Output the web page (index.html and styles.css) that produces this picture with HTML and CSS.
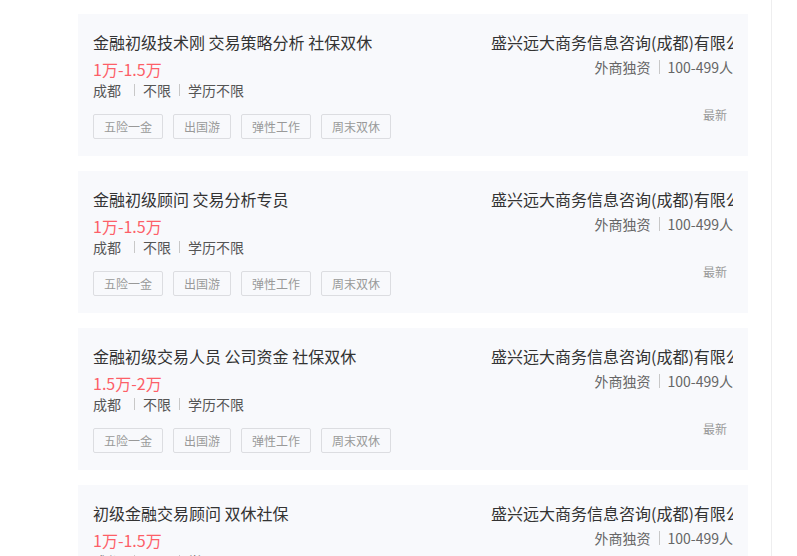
FILE: index.html
```html
<!DOCTYPE html>
<html lang="zh-CN">
<head>
<meta charset="utf-8">
<title>职位列表</title>
<link rel="stylesheet" href="styles.css">
</head>
<body>
<div class="page">
  <div class="list">
    <div class="card">
      <div class="left">
        <div class="title">金融初级技术刚 交易策略分析 社保双休</div>
        <div class="salary">1万-1.5万</div>
        <div class="info"><span class="city">成都</span><i class="sep"></i><span>不限</span><i class="sep"></i><span>学历不限</span></div>
        <div class="tags"><span class="tag">五险一金</span><span class="tag">出国游</span><span class="tag">弹性工作</span><span class="tag">周末双休</span></div>
      </div>
      <div class="right">
        <div class="company">盛兴远大商务信息咨询(成都)有限公司</div>
        <div class="meta"><span>外商独资</span><i class="sep"></i><span>100-499人</span></div>
        <div class="time">最新</div>
      </div>
    </div>
    <div class="card">
      <div class="left">
        <div class="title">金融初级顾问 交易分析专员</div>
        <div class="salary">1万-1.5万</div>
        <div class="info"><span class="city">成都</span><i class="sep"></i><span>不限</span><i class="sep"></i><span>学历不限</span></div>
        <div class="tags"><span class="tag">五险一金</span><span class="tag">出国游</span><span class="tag">弹性工作</span><span class="tag">周末双休</span></div>
      </div>
      <div class="right">
        <div class="company">盛兴远大商务信息咨询(成都)有限公司</div>
        <div class="meta"><span>外商独资</span><i class="sep"></i><span>100-499人</span></div>
        <div class="time">最新</div>
      </div>
    </div>
    <div class="card">
      <div class="left">
        <div class="title">金融初级交易人员 公司资金 社保双休</div>
        <div class="salary">1.5万-2万</div>
        <div class="info"><span class="city">成都</span><i class="sep"></i><span>不限</span><i class="sep"></i><span>学历不限</span></div>
        <div class="tags"><span class="tag">五险一金</span><span class="tag">出国游</span><span class="tag">弹性工作</span><span class="tag">周末双休</span></div>
      </div>
      <div class="right">
        <div class="company">盛兴远大商务信息咨询(成都)有限公司</div>
        <div class="meta"><span>外商独资</span><i class="sep"></i><span>100-499人</span></div>
        <div class="time">最新</div>
      </div>
    </div>
    <div class="card">
      <div class="left">
        <div class="title">初级金融交易顾问 双休社保</div>
        <div class="salary">1万-1.5万</div>
        <div class="info"><span class="city">成都</span><i class="sep"></i><span>不限</span><i class="sep"></i><span>学历不限</span></div>
        <div class="tags"><span class="tag">五险一金</span><span class="tag">出国游</span><span class="tag">弹性工作</span><span class="tag">周末双休</span></div>
      </div>
      <div class="right">
        <div class="company">盛兴远大商务信息咨询(成都)有限公司</div>
        <div class="meta"><span>外商独资</span><i class="sep"></i><span>100-499人</span></div>
        <div class="time">最新</div>
      </div>
    </div>
  </div>
  <div class="side"></div>
</div>
</body>
</html>
```
FILE: styles.css
```css
* { box-sizing: border-box; }
html, body { margin: 0; padding: 0; background: #fff; }
body {
  font-family: "Noto Sans CJK SC", "Liberation Sans", sans-serif;
  color: #333;
  height: 556px;
  overflow: hidden;
}
.page {
  display: flex;
  height: 556px;
  padding-left: 78px;
}
.list {
  width: 670px;
  padding-top: 14px;
  display: flex;
  flex-direction: column;
  gap: 15px;
}
.side {
  margin-left: 23px;
  width: 1px;
  background: #eeeeef;
  height: 100%;
}
.card {
  flex: none;
  height: 142px;
  background: #f8f9fc;
  padding: 17px 15px 0 15px;
  display: flex;
  justify-content: space-between;
}
.left { display: flex; flex-direction: column; }
.title {
  font-size: 16px;
  line-height: 22px;
  color: #333;
  white-space: nowrap;
}
.salary {
  margin-top: 5px;
  font-size: 16px;
  line-height: 22px;
  color: #fd5f68;
}
.info {
  font-size: 14px;
  line-height: 20px;
  color: #555;
  display: flex;
  align-items: center;
  white-space: nowrap;
}
.info .city { margin-right: 5px; }
.sep {
  display: inline-block;
  width: 1px;
  height: 12px;
  background: #c8c8c8;
  margin: 0 8px;
}
.tags {
  margin-top: 14px;
  display: flex;
  gap: 10px;
}
.tag {
  height: 25px;
  line-height: 23px;
  padding: 0 10px;
  border: 1px solid #dcdde1;
  border-radius: 2px;
  font-size: 12px;
  color: #999;
  white-space: nowrap;
}
.right {
  width: 242px;
  display: flex;
  flex-direction: column;
  align-items: flex-end;
}
.company {
  width: 242px;
  font-size: 16px;
  line-height: 22px;
  color: #333;
  white-space: nowrap;
  overflow: hidden;
}
.meta {
  margin-top: 3px;
  font-size: 14px;
  line-height: 22px;
  color: #666;
  display: flex;
  align-items: center;
  white-space: nowrap;
}
.meta .sep { margin: 0 8px; height: 14px; }
.time {
  margin-top: 28px;
  margin-right: 6px;
  font-size: 12px;
  line-height: 18px;
  color: #999;
}
```
